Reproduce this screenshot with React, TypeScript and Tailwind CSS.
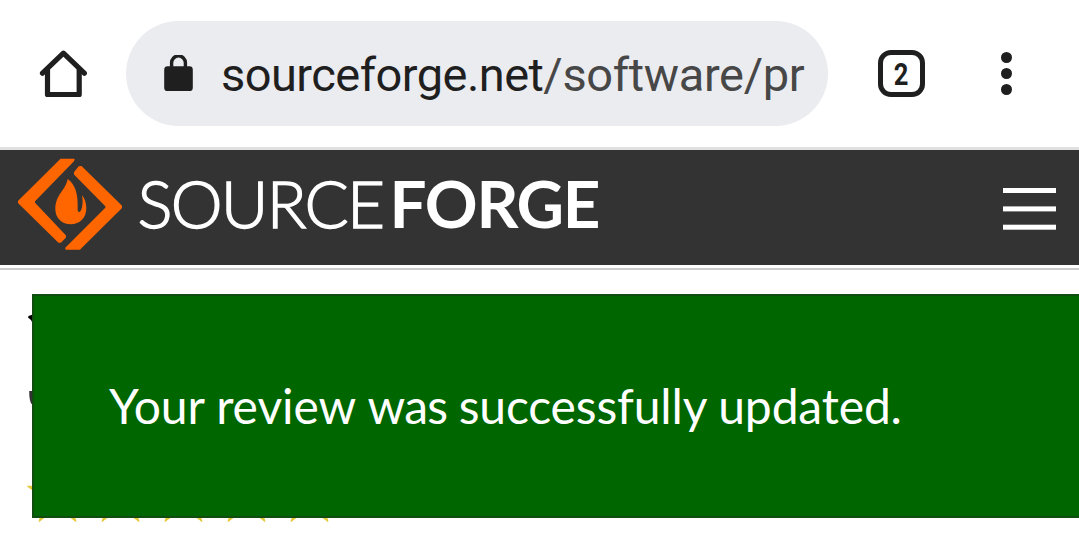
const STAR_COUNT = 5;

function HomeIcon() {
  return (
    <svg
      viewBox="0 0 48 48"
      className="h-12 w-12 shrink-0 text-[#1f1f1f]"
      fill="none"
      stroke="currentColor"
      strokeWidth={5.2}
      strokeLinecap="round"
      strokeLinejoin="round"
    >
      <path d="M3.5 23.2 24.4 3.2 45.3 23.2" />
      <path d="M8.5 20v24.5h31.7V20" />
    </svg>
  );
}

function LockIcon() {
  return (
    <svg viewBox="0 0 30 38" className="h-[38px] w-[30px] shrink-0 text-[#1f1f1f]">
      <rect x={0.2} y={11.3} width={28.6} height={24.8} rx={3.4} fill="currentColor" />
      <path
        d="M7.6 14V7.8a6.9 6.9 0 0 1 13.8 0V14"
        fill="none"
        stroke="currentColor"
        strokeWidth={3.4}
      />
    </svg>
  );
}

function BrowserBar() {
  return (
    <header className="flex h-[150px] items-center border-b-[3px] border-[#e0e0e0] bg-white pl-[39px]">
      <HomeIcon />

      <div className="ml-[39px] flex h-[105px] w-[702px] shrink-0 items-center rounded-full bg-[#ebecf0] pl-[38px]">
        <LockIcon />
        <p className="ml-[27px] pt-0.5 font-[Roboto,sans-serif] text-[47px] leading-none tracking-[-0.55px] whitespace-nowrap text-[#1f1f1f]">
          sourceforge.net
          <span className="tracking-[-0.35px] text-[#474747]">/software/pr</span>
        </p>
      </div>

      <div className="ml-[50px] flex h-[47px] w-[47px] shrink-0 items-center justify-center rounded-[13px] border-[5px] border-[#1f1f1f]">
        <span className="mr-px scale-x-80 font-[Roboto,sans-serif] text-[32px] leading-none font-bold text-[#1f1f1f]">
          2
        </span>
      </div>

      <div className="ml-[76px] flex flex-col gap-[5px]">
        <span className="h-[11px] w-[11px] rounded-full bg-[#1f1f1f]" />
        <span className="h-[11px] w-[11px] rounded-full bg-[#1f1f1f]" />
        <span className="h-[11px] w-[11px] rounded-full bg-[#1f1f1f]" />
      </div>
    </header>
  );
}

function Logo() {
  return (
    <svg
      viewBox="0 0 600 110"
      className="h-[110px] w-[600px] font-[Lato,sans-serif]"
      role="img"
      aria-label="SourceForge"
    >
      <g transform="scale(0.33333)" fill="#ff6600">
        <g stroke="#ff6600" strokeWidth={4} strokeLinejoin="round">
          <path d="M153 28H192L189 34 73 153V159L166 257V262L152 276H146L26 158V154Z" />
          <path d="M207 51 214 50 334 168V173L209 297H168V294L288 174V168L194 73V67Z" />
        </g>
        <path d="M173 87C168 120 136 133 136 178C136 205 157 223 182 223C210 223 229 203 229 175C229 159 224 145 216 136C220 158 217 180 209 186C204 187 202 182 203 170C204 135 197 104 173 87Z" />
      </g>
      <text
        x={127.5}
        y={78.4}
        fontSize={65.5}
        fontWeight={300}
        fill="#fff"
        stroke="#fff"
        strokeWidth={1.4}
        textLength={247.5}
        lengthAdjust="spacing"
      >
        SOURCE
      </text>
      <text
        x={379.5}
        y={78.4}
        fontSize={65.5}
        fontWeight={700}
        fill="#fff"
        textLength={211}
        lengthAdjust="spacing"
      >
        FORGE
      </text>
    </svg>
  );
}

function MenuIcon() {
  return (
    <svg viewBox="0 0 53 42" className="mt-[38px] h-[42px] w-[53px]" fill="#fff">
      <rect width={53} height={5} />
      <rect y={18.4} width={53} height={5} />
      <rect y={36.7} width={53} height={5} />
    </svg>
  );
}

function SiteHeader() {
  return (
    <div className="border-b-2 border-[#ccc] pb-[3px]">
      <nav className="flex h-[115px] items-start justify-between bg-[#333] pr-[23px] pl-[10px]">
        <Logo />
        <MenuIcon />
      </nav>
    </div>
  );
}

function ReviewStars() {
  return (
    <div className="flex">
      {Array.from({ length: STAR_COUNT }, (_, index) => (
        <svg
          key={index}
          viewBox="-31.5 -32 63 64"
          className="h-16 w-[63px]"
          fill="#e3c938"
          stroke="#e3c938"
          strokeWidth={1}
        >
          <path d="M0-31.5 7.1-9.7H30L11.5 3.7 18.5 25.5 0 12-18.5 25.5-11.5 3.7-30-9.7H-7.1Z" />
        </svg>
      ))}
    </div>
  );
}

export default function App() {
  return (
    <div className="h-[536px] w-[1079px] overflow-hidden bg-white">
      <BrowserBar />
      <SiteHeader />

      <main className="relative h-[266px] pl-[26px]">
        {/* page content mostly hidden behind the notice */}
        <div className="h-[194px] pt-[44px]">
          <svg viewBox="0 0 8 92" className="h-[92px] w-2">
            <path d="M2 3.5Q2 1.5 4 1.5L8 0V9L6 8 5 6Z" fill="#000" />
            <path d="M3.2 77H8V90H5.5Q3.2 87 3.2 77Z" fill="#333" />
          </svg>
        </div>
        <ReviewStars />

        <div className="absolute top-[24px] right-0 left-[32px] flex h-[224px] items-center border-2 border-r-0 border-[#114d11] bg-[#006600] pl-[75px]">
          <p className="font-[Lato,sans-serif] text-[48px] leading-none tracking-[-0.05px] whitespace-nowrap text-white">
            Your review <span className="tracking-[-0.8px]">was </span>
            <span className="tracking-[-0.15px]">successfully updated.</span>
          </p>
        </div>
      </main>
    </div>
  );
}
